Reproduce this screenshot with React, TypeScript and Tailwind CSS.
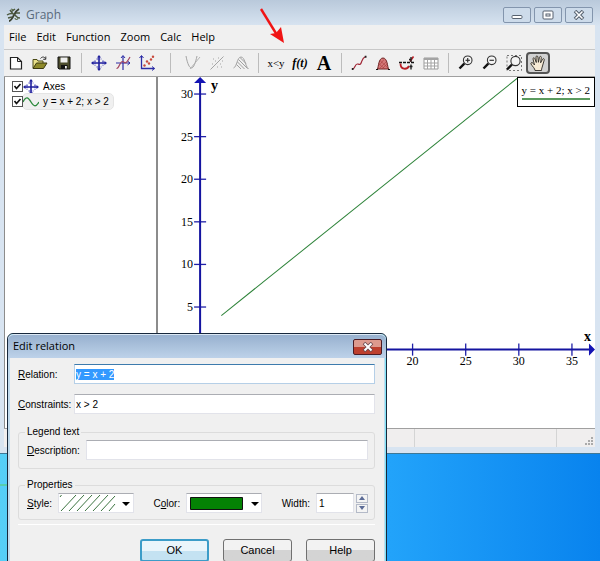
import { useEffect, useRef, useState } from "react";
import type { ReactNode } from "react";

const MENU = ["File", "Edit", "Function", "Zoom", "Calc", "Help"];

const Y_TICKS = [5, 10, 15, 20, 25, 30];
const X_TICKS = [20, 25, 30, 35];

// plot origin and pixels per unit
const ORIGIN = { x: 42, y: 272 };
const SCALE = { x: 10.6, y: 8.5 };
const px = (x: number) => ORIGIN.x + x * SCALE.x;
const py = (y: number) => ORIGIN.y - y * SCALE.y;

function Icon({ children }: { children: ReactNode }) {
  return (
    <svg viewBox="0 0 16 16" className="h-4 w-4 shrink-0" fill="none" aria-hidden="true">
      {children}
    </svg>
  );
}

function AxesIcon() {
  return (
    <Icon>
      <path d="M8 1v14M1 8h14" stroke="#20209c" strokeWidth="1.6" />
      <path d="M5.5 4h5M5.5 12h5M4 5.5v5M12 5.5v5" stroke="#3434b4" strokeWidth="1.2" strokeDasharray="1.5 .8" />
      <path d="M8 0l2 2.5H6zM8 16l2-2.5H6zM0 8l2.5-2v4zM16 8l-2.5-2v4z" fill="#20209c" />
    </Icon>
  );
}

function Magnifier({ sign }: { sign?: "plus" | "minus" }) {
  return (
    <Icon>
      <path d="M6.3 8.7L1.5 13.5" stroke="#111" strokeWidth="2.4" />
      <circle cx="9.7" cy="5.3" r="4.3" fill="#f4f4f4" stroke="#333" strokeWidth="1.1" />
      {sign && <path d="M7.5 5.3h4.4" stroke="#333" strokeWidth="1.2" />}
      {sign === "plus" && <path d="M9.7 3.1v4.4" stroke="#333" strokeWidth="1.2" />}
    </Icon>
  );
}

const GROUPS: { label: string; icon: ReactNode; pressed?: boolean }[][] = [
  [
    {
      label: "New",
      icon: (
        <Icon>
          <path d="M2.5 2.5h7l4 4v7.5h-11z" fill="#fff" stroke="#222" strokeWidth="1.2" />
          <path d="M9.5 2.5v4h4" stroke="#222" />
        </Icon>
      ),
    },
    {
      label: "Open",
      icon: (
        <Icon>
          <path d="M1 13V4.5h4l1 1.5h5v2" fill="#e8e08a" stroke="#4b4a16" />
          <path d="M1 13.5L4.5 8H15l-3.5 5.5z" fill="#8e8a2a" stroke="#3a3910" />
          <path d="M8.5 3.5c1.5-2 4-2 5 .3M13.8 1.5v2.8h-2.6" stroke="#333" />
        </Icon>
      ),
    },
    {
      label: "Save",
      icon: (
        <Icon>
          <path d="M2 2h12v12H3l-1-1z" fill="#4b4b2c" stroke="#111" />
          <path d="M4.5 2.5h7v5h-7z" fill="#eee" />
          <path d="M5 10h6.5v4H5z" fill="#111" />
          <path d="M9 11h1.8v2.5H9z" fill="#eee" />
        </Icon>
      ),
    },
  ],
  [
    { label: "Axes", icon: <AxesIcon /> },
    {
      label: "Insert function",
      icon: (
        <Icon>
          <path d="M8 1v14M1 8h14" stroke="#2c2ca6" strokeWidth="1.2" />
          <path d="M6 3l2-2.5L10 3M12.5 6L15 8l-2.5 2" stroke="#2c2ca6" />
          <path d="M1.5 13.5C4 14 5 6 7.5 6.5S10 11 15 2" stroke="#a34560" strokeWidth="1.2" />
        </Icon>
      ),
    },
    {
      label: "Insert point series",
      icon: (
        <Icon>
          <path d="M2.5 1v12.5H15.5" stroke="#2c2ca6" strokeWidth="1.3" />
          <path d="M.5 3L2.5 .5l2 2.5M13 11.5l2.5 2-2.5 2" stroke="#2c2ca6" />
          <g fill="#c8493c">
            <circle cx="5.5" cy="10.5" r="1.2" />
            <circle cx="8" cy="6.5" r="1.2" />
            <circle cx="10" cy="8.5" r="1.2" />
            <circle cx="12" cy="4.5" r="1.2" />
            <circle cx="14" cy="1.8" r="1.2" />
          </g>
        </Icon>
      ),
    },
  ],
  [
    {
      label: "Insert tangent",
      icon: (
        <Icon>
          <path d="M1 1c1.5 8 3.5 12 5.5 12S10.5 8 12 1" stroke="#a4a4a4" />
          <path d="M5 14L15 2" stroke="#b4b4b4" />
        </Icon>
      ),
    },
    {
      label: "Insert trendline",
      icon: (
        <Icon>
          <path d="M1.5 14.5L14.5 1.5" stroke="#a4a4a4" />
          <path d="M3 9h1M6 6h1M9 3h1M8 12h1M11 9h1M13 6h1M4 4h1M12 12h1" stroke="#a4a4a4" strokeWidth="1.2" />
        </Icon>
      ),
    },
    {
      label: "Insert shading",
      icon: (
        <Icon>
          <path d="M.5 13C4 12 4 2 8 2s4 9 7.5 12" stroke="#a4a4a4" />
          <path d="M5.5 4.5l9 9M4.5 7l7 7M3.5 9.5l4.5 4.5M7 2.5l6 6" stroke="#a0a0a0" />
        </Icon>
      ),
    },
  ],
  [
    { label: "Insert relation", icon: <span className="text-[11px]">x&lt;y</span> },
    { label: "Custom functions", icon: <span className="text-xs font-bold italic">f(t)</span> },
    { label: "Insert label", icon: <span className="text-xl font-bold">A</span> },
  ],
  [
    {
      label: "Evaluate",
      icon: (
        <Icon>
          <path d="M1.5 14C4 14 4 8.5 6.5 9s3 1 4-2 1-4 4-5.5" stroke="#a02434" strokeWidth="1.2" />
          <path d="M.8 13h1.7v2H.8zM13.8.8h1.7v2h-1.7z" fill="#222" />
        </Icon>
      ),
    },
    {
      label: "Calculate area",
      icon: (
        <Icon>
          <path d="M2.5 14C3.5 12 3.5 3 8 3s4.5 9 5.5 11z" fill="#d47878" stroke="#6c2020" />
          <path d="M4 14l7-7M7 14l5-5M4.5 10L9 4.5M4 9l6 5M5 5.5l8 7.5" stroke="#a83c3c" strokeWidth=".6" />
          <path d="M1 14.5h2M13 14.5h2" stroke="#111" />
        </Icon>
      ),
    },
    {
      label: "Length of path",
      icon: (
        <Icon>
          <path d="M1.5 8.5c0 6.500 6.500 6.500 8.500 2.500" stroke="#b81c24" strokeWidth="1.8" />
          <path d="M11 6.5L14.5 1.5" stroke="#b81c24" strokeWidth="1.6" />
          <path d="M0 7.5h15.500" stroke="#111" strokeWidth="1.7" strokeDasharray="3 1" />
          <path d="M12 2v5M12 9.500v5M10 4.500h2M10.500 11.500h3" stroke="#222" strokeWidth="1.4" />
        </Icon>
      ),
    },
    {
      label: "Table",
      icon: (
        <Icon>
          <path d="M1 3h14v11H1z" fill="#fff" stroke="#9a9a9a" />
          <path d="M1 3h14v2H1z" fill="#a4a4a4" />
          <path d="M1 8h14M1 11h14M4.5 4v10M8 4v10M11.5 4v10" stroke="#a4a4a4" />
        </Icon>
      ),
    },
  ],
  [
    { label: "Zoom in", icon: <Magnifier sign="plus" /> },
    { label: "Zoom out", icon: <Magnifier sign="minus" /> },
    {
      label: "Zoom window",
      icon: (
        <Icon>
          <path d="M1 .5h14.5v15H1z" stroke="#777" strokeDasharray="2 2" />
          <path d="M6 9.5L1 14.5" stroke="#111" strokeWidth="2.4" />
          <circle cx="9.5" cy="6" r="4.6" fill="#f4f4f4" stroke="#333" strokeWidth="1.1" />
        </Icon>
      ),
    },
    {
      label: "Move",
      pressed: true,
      icon: (
        <Icon>
          <path
            d="M5 15.5c0-2-2.5-4-4-6.5-.5-1.5 1-2 2-.8L4.5 10 3 4c-.2-1.4 1.3-1.7 1.8-.4L6.3 7.5 6 2c0-1.4 1.7-1.4 1.9 0l.5 5.3L9.5 2.2c.3-1.3 2-1 1.8.4l-.7 5.2 2-3.6c.7-1.2 2.1-.4 1.6.9L12.5 11c-.3 1.5-1 2.5-1 4.5z"
            fill="#f6ead6"
            stroke="#2c2924"
            strokeWidth=".9"
          />
        </Icon>
      ),
    },
  ],
];

function TitleBar() {
  const caption = "flex h-4 w-[28px] items-center justify-center rounded-[2px] border border-[#8395ad] bg-[#cddbea]";
  return (
    <header className="flex h-[25px] items-center justify-between px-0.5">
      <div className="flex items-center gap-1 pt-1 text-[#5a6b7c]">
        <Icon>
          <path d="M3 14c2 0 3-2 5-6s3-5 5-6" stroke="#3b4232" strokeWidth="1.8" />
          <path d="M1 8c3-2 6-2 8 0s2 3 5 3M4 3l3 4M9 2L5 5M10 6h4M2 11l4-1" stroke="#4c583e" strokeWidth="1.5" />
          <path d="M9 11a1.5 1.5 0 103 0M5 2l3 1" stroke="#5f7050" strokeWidth="1.2" />
        </Icon>
        <h1 className="text-xs">Graph</h1>
      </div>
      <div className="mt-1 flex gap-[3px]">
        <button className={caption} aria-label="Minimize">
          <svg viewBox="0 0 12 10" className="h-2.5 w-3" fill="#fff" stroke="#56616f" aria-hidden="true">
            <rect x="1" y="5.5" width="10" height="3" rx="1" />
          </svg>
        </button>
        <button className={caption} aria-label="Maximize">
          <svg viewBox="0 0 12 10" className="h-2.5 w-3" fill="#fff" stroke="#56616f" aria-hidden="true">
            <rect x="1" y="1" width="10" height="8" rx="1" />
            <rect x="4" y="4" width="4" height="2" />
          </svg>
        </button>
        <button className={caption} aria-label="Close">
          <svg viewBox="0 0 12 10" className="h-2.5 w-3" aria-hidden="true">
            <path d="M2 1l8 8M10 1L2 9" stroke="#56616f" strokeWidth="3.6" />
            <path d="M2.5 1.5l7 7M9.5 1.5l-7 7" stroke="#fff" strokeWidth="1.5" />
          </svg>
        </button>
      </div>
    </header>
  );
}

function Toolbar() {
  return (
    <div role="toolbar" className="flex h-[27px] items-center border-t border-[#c8c8c8] bg-[#f0f0f0] font-['Liberation_Serif',serif] text-black">
      {GROUPS.map((group, i) => (
        <div key={i} className="flex items-center">
          {i > 0 && (
            <div className={`flex justify-center ${i === 2 ? "w-[22px]" : "w-[11px]"}`}>
              <div className="h-5 w-px bg-[#bcbcbc]" />
            </div>
          )}
          {group.map(({ label, icon, pressed }) => (
            <button
              key={label}
              aria-label={label}
              title={label}
              className={`flex h-[22px] w-6 items-center justify-center rounded-sm ${
                pressed ? "border-2 border-[#555] bg-[#d2d2d2]" : ""
              }`}
            >
              {icon}
            </button>
          ))}
        </div>
      ))}
    </div>
  );
}

function ListItem({ label, icon, selected }: { label: string; icon: ReactNode; selected?: boolean }) {
  const [checked, setChecked] = useState(true);
  return (
    <label className="flex h-[15px] items-center">
      <span className="relative flex h-[11px] w-[11px]">
        <input
          type="checkbox"
          checked={checked}
          onChange={(e) => setChecked(e.target.checked)}
          className="h-[11px] w-[11px] appearance-none border border-[#555] bg-white"
        />
        {checked && (
          <svg viewBox="0 0 11 11" className="pointer-events-none absolute inset-0" fill="none" aria-hidden="true">
            <path d="M2.5 5l2 2.5L8.5 3" stroke="#111" strokeWidth="1.7" />
          </svg>
        )}
      </span>
      <span className={`flex h-[15px] items-center gap-1 rounded-sm pr-1 ${selected ? "bg-[#f0f0f0] outline outline-[#e4e4e4]" : ""}`}>
        {icon}
        <span className="whitespace-nowrap">{label}</span>
      </span>
    </label>
  );
}

function Plot() {
  return (
    <div className="relative min-w-0 flex-1 overflow-hidden bg-white font-['Liberation_Serif',serif] text-black">
      <svg viewBox="0 0 436 350" className="w-full" role="img" aria-label="y = x + 2; x > 2">
        <g stroke="#2020a8" strokeWidth="1.3">
          {Y_TICKS.map((t) => (
            <path key={t} d={`M${ORIGIN.x - 6} ${py(t)}h12`} />
          ))}
          {X_TICKS.map((t) => (
            <path key={t} d={`M${px(t)} ${ORIGIN.y - 6}v12`} />
          ))}
        </g>
        <path d={`M${ORIGIN.x} 4V350M0 ${ORIGIN.y}H432`} stroke="#1414a0" strokeWidth="2" />
        <path d={`M${ORIGIN.x} 0l6 6h-12zM436 ${ORIGIN.y}l-6-6v12z`} fill="#1414b4" />
        <path d={`M${px(2)} ${py(4)}L360 0`} stroke="#2c8238" />
        <g fontSize="12" textAnchor="end">
          {Y_TICKS.map((t) => (
            <text key={t} x={ORIGIN.x - 7} y={py(t) + 4}>{t}</text>
          ))}
        </g>
        <g fontSize="12" textAnchor="middle">
          {X_TICKS.map((t) => (
            <text key={t} x={px(t)} y={ORIGIN.y + 15}>{t}</text>
          ))}
        </g>
        <g fontSize="14" fontWeight="bold">
          <text x="53" y="13">y</text>
          <text x="425" y="263">x</text>
        </g>
      </svg>
      <div className="absolute top-0 right-0 border border-black bg-white px-1 pt-1 pb-1.5 text-[11px]">
        <div className="border-b-2 border-[#5a9a5e] leading-4">y = x + 2; x &gt; 2</div>
      </div>
    </div>
  );
}

function Dialog() {
  const relation = useRef<HTMLInputElement>(null);

  useEffect(() => {
    relation.current?.focus();
    relation.current?.select();
  }, []);

  const field = "h-5 min-w-0 flex-1 border border-[#e2e3ea] border-t-[#abadb3] bg-white px-px outline-none";
  const button = "h-[23px] w-[69px] rounded-[3px] border border-[#707070] bg-linear-to-b from-[#f2f2f2] from-50% to-[#d4d4d4] to-50%";

  return (
    <section
      role="dialog"
      aria-label="Edit relation"
      className="absolute top-[333px] left-[7px] w-[380px] rounded-t-md border border-[#17283c] bg-[#c3dcee] px-[2px] font-['Liberation_Sans',sans-serif] text-[10px] text-black shadow-[inset_-1px_1px_0_#7fe3f5]"
    >
      <header className="-mx-[2px] flex h-6 items-center justify-between rounded-t-md border-t border-[#dce9f5] bg-linear-to-b from-[#98b1cf] to-[#bdd2e9] pr-1 pl-[5px]">
        <h2 className="font-['Open_Sans',sans-serif] text-[11px]">Edit relation</h2>
        <button className="flex h-4 w-[29px] items-center justify-center rounded-[2px] border border-[#4c1c24] bg-linear-to-b from-[#dd9a8e] from-50% to-[#bd3f2e] to-50%" aria-label="Close">
          <svg viewBox="0 0 12 10" className="h-2.5 w-3" aria-hidden="true">
            <path d="M2 1l8 8M10 1L2 9" stroke="#6a4a50" strokeWidth="3.6" />
            <path d="M2.5 1.5l7 7M9.5 1.5l-7 7" stroke="#fff" strokeWidth="2" />
          </svg>
        </button>
      </header>

      <form className="bg-[#f0f0f0] pt-1.5 pr-[9px] pb-3 pl-2" onSubmit={(e) => e.preventDefault()}>
        <div className="flex items-center">
          <label htmlFor="relation" className="w-14"><u>R</u>elation:</label>
          <input
            id="relation"
            ref={relation}
            defaultValue="y = x + 2"
            className="h-5 min-w-0 flex-1 border border-[#b5cfe7] border-t-[#3d7bad] bg-white px-px outline-none selection:bg-[#3399ff] selection:text-white"
          />
        </div>
        <div className="mt-2.5 flex items-center">
          <label htmlFor="constraints" className="w-14"><u>C</u>onstraints:</label>
          <input id="constraints" defaultValue="x > 2" className={field} />
        </div>

        <fieldset className="mt-2.5 rounded-[3px] border border-[#dcdcdc] px-1.5 pb-2">
          <legend className="px-0.5 leading-4">Legend text</legend>
          <div className="flex items-center gap-1.5 pl-0.5">
            <label htmlFor="description"><u>D</u>escription:</label>
            <input id="description" className={field} />
          </div>
        </fieldset>

        <fieldset className="mt-2 rounded-[3px] border border-[#dcdcdc] px-1.5 pb-1.5">
          <legend className="px-0.5 leading-4">Properties</legend>
          <div className="flex items-center justify-between pl-0.5">
            <div className="flex items-center gap-1.5">
              <label htmlFor="style"><u>S</u>tyle:</label>
              <div className="relative flex">
                <select id="style" className="h-5 w-[76px] appearance-none border border-[#e2e3ea] border-t-[#abadb3] bg-white text-transparent">
                  <option aria-label="Diagonal hatch" />
                </select>
                <svg viewBox="0 0 76 20" className="pointer-events-none absolute inset-0" aria-hidden="true">
                  <path d="M2 4l1.5-2M3 18L18 2M11 18L26 2M19 18L34 2M27 18L42 2M35 18L50 2M43 18L57 3M51 18L57 11" stroke="#3c7440" fill="none" />
                  <path d="M64 9h8l-4 4z" />
                </svg>
              </div>
            </div>
            <div className="flex items-center gap-1.5">
              <label htmlFor="color">C<u>o</u>lor:</label>
              <div className="relative flex">
                <select id="color" className="h-5 w-[76px] appearance-none border border-[#e2e3ea] border-t-[#abadb3] bg-white text-transparent">
                  <option aria-label="Green" />
                </select>
                <svg viewBox="0 0 76 20" className="pointer-events-none absolute inset-0" aria-hidden="true">
                  <path d="M4.5 4.5h52v12h-52z" fill="#048204" stroke="#111" />
                  <path d="M65 9h8l-4 4z" />
                </svg>
              </div>
            </div>
            <div className="flex items-center gap-0.5">
              <label htmlFor="width" className="pr-1">Width:</label>
              <input id="width" defaultValue="1" className="h-5 w-[38px] border border-[#e2e3ea] border-t-[#abadb3] bg-white px-0.5 outline-none" />
              <div className="flex flex-col gap-px">
                <button type="button" aria-label="Increase width" className="flex h-[9px] w-3 items-center justify-center border border-[#b4bac8] bg-[#f4f4f4]">
                  <svg viewBox="0 0 6 4" className="h-1 w-1.5" fill="#5b6b96" aria-hidden="true"><path d="M0 4l3-4 3 4z" /></svg>
                </button>
                <button type="button" aria-label="Decrease width" className="flex h-[9px] w-3 items-center justify-center border border-[#b4bac8] bg-[#f4f4f4]">
                  <svg viewBox="0 0 6 4" className="h-1 w-1.5" fill="#5b6b96" aria-hidden="true"><path d="M0 0l3 4 3-4z" /></svg>
                </button>
              </div>
            </div>
          </div>
        </fieldset>

        <div className="mt-1 flex justify-end gap-3.5 border-t border-white pt-3.5 text-[11px]">
          <button className="h-[23px] w-[69px] rounded-[3px] border-2 border-[#3c9cc8] bg-linear-to-b from-[#eaf5fb] from-50% to-[#c4e2f2] to-50%">OK</button>
          <button type="button" className={button}>Cancel</button>
          <button type="button" className={button}>Help</button>
        </div>
      </form>
    </section>
  );
}

export default function App() {
  return (
    <div className="relative h-screen overflow-hidden bg-linear-to-r from-[#55cff8] via-[#22a3fa] via-65% to-[#0883ee]">
      <main className="border-b border-[#3f7896] bg-linear-to-b from-[#b9c9db] to-[#d8e4f1] to-[26px] pr-[5px] pb-1.5 pl-1 font-['Open_Sans',sans-serif]">
        <TitleBar />
        <nav className="flex h-6 items-center gap-2.5 bg-[#f0f0f0] px-[5px] text-[11px] text-black">
          {MENU.map((item) => (
            <button key={item}>{item}</button>
          ))}
        </nav>
        <Toolbar />
        <div className="flex border-t border-[#a0a0a0]">
          <aside className="w-[154px] shrink-0 border-r-2 border-l border-[#8c8c8c] bg-white px-[7px] pt-0.5 font-['Liberation_Sans',sans-serif] text-[10px] text-black">
            <ListItem label="Axes" icon={<AxesIcon />} />
            <ListItem
              label="y = x + 2; x > 2"
              selected
              icon={
                <Icon>
                  <path d="M0 8c3-6 5-5 8 0s5 5 8 0" stroke="#2b8a3c" strokeWidth="1.4" />
                </Icon>
              }
            />
          </aside>
          <Plot />
        </div>
        <footer className="flex h-[19px] justify-end border-t border-[#a0a0a0] bg-[#f0eeee]">
          <div className="w-[142px] border-l border-[#d4d4d4]" />
          <div className="flex w-[39px] items-end justify-end border-l border-[#d4d4d4] p-0.5">
            <svg viewBox="0 0 8 8" className="h-2 w-2" fill="#aaa" aria-hidden="true">
              <path d="M6 0h2v2H6zM3 3h2v2H3zM6 3h2v2H6zM0 6h2v2H0zM3 6h2v2H3zM6 6h2v2H6z" />
            </svg>
          </div>
        </footer>
      </main>

      {/* green wallpaper streak */}
      <div className="h-8 w-2 border-b-2 border-[#57cfae]" />

      {/* callout arrow over the relation button */}
      <svg viewBox="0 0 26 38" className="pointer-events-none absolute top-[7px] left-[259px] h-[38px] w-[26px]" aria-hidden="true">
        <path d="M2 2l16 26" stroke="#f01414" strokeWidth="2.4" />
        <path d="M25 36L11 27l6-1 5-6z" fill="#f01414" />
      </svg>

      <Dialog />
    </div>
  );
}
